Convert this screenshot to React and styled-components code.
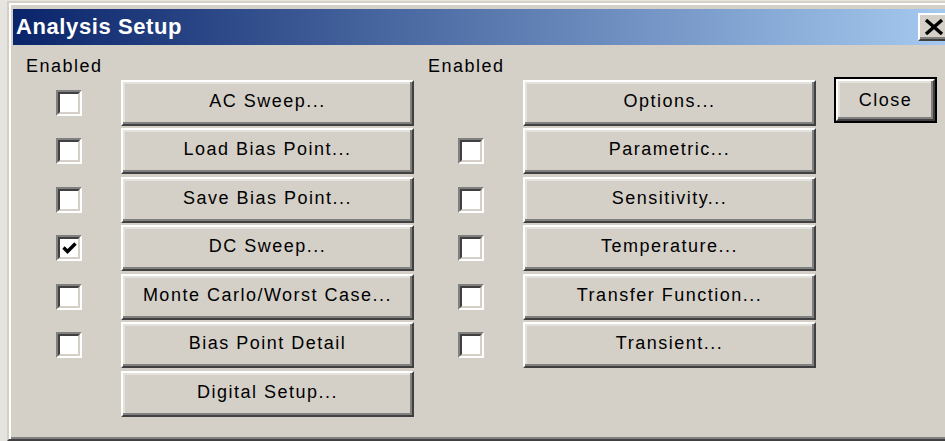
import { Fragment } from "react";
import styled, { createGlobalStyle } from "styled-components";

const GlobalStyle = createGlobalStyle`
  html, body {
    margin: 0;
    padding: 0;
    background: #e6e4df;
    overflow: hidden;
  }
`;

const Page = styled.div`
  width: 945px;
  height: 441px;
  overflow: hidden;
  padding: 1px 0 0 7px;
  box-sizing: border-box;
`;

const Window = styled.div`
  width: 944px;
  height: 440px;
  box-sizing: border-box;
  background: #d4d0c8;
  border-top: 2px solid #d4d0c8;
  border-left: 2px solid #d4d0c8;
  border-bottom: 2px solid #404040;
  box-shadow: inset 2px 2px 0 #ffffff, inset 0 -2px 0 #808080;
  padding: 6px 0 0 4px;
  font-family: "Liberation Sans", Arial, sans-serif;
`;

const TitleBar = styled.div`
  height: 36px;
  display: flex;
  align-items: center;
  justify-content: space-between;
  background: linear-gradient(to right, #0a246a, #a6caf0);
  padding: 0 1px 0 3px;
`;

const TitleText = styled.span`
  color: #ffffff;
  font-size: 22px;
  font-weight: bold;
  letter-spacing: 0.6px;
  line-height: 36px;
`;

const TitleButton = styled.button`
  width: 32px;
  height: 28px;
  padding: 0;
  display: flex;
  align-items: center;
  justify-content: center;
  background: #d4d0c8;
  border: 2px solid;
  border-color: #ffffff #404040 #404040 #ffffff;
  box-shadow: inset -2px -2px 0 #808080;
`;

const Body = styled.div`
  display: flex;
  align-items: flex-start;
  padding: 10px 0 0 13px;
`;

const Section = styled.div`
  display: grid;
  grid-template-columns: 95px 293px;
  row-gap: 2.5px;
  margin-right: ${(p) => p.$gap || 0}px;
`;

const Label = styled.div`
  grid-column: 1 / span 2;
  font-size: 18px;
  letter-spacing: 1.5px;
  line-height: 22px;
  color: #000;
`;

const CheckCell = styled.div`
  display: flex;
  align-items: center;
  padding-left: 30px;
`;

const CheckBox = styled.div`
  width: 26px;
  height: 26px;
  box-sizing: border-box;
  border: 2px solid;
  border-color: #808080 #ffffff #ffffff #808080;
  display: flex;
`;

const CheckInner = styled.div`
  flex: 1;
  background: #ffffff;
  border: 2px solid;
  border-color: #404040 #d4d0c8 #d4d0c8 #404040;
  display: flex;
  align-items: center;
  justify-content: center;
`;

const Button = styled.button`
  height: ${(p) => p.$height || 46}px;
  width: ${(p) => p.$width || 293}px;
  box-sizing: border-box;
  padding: 0 0 4px;
  background: #d4d0c8;
  border: 2px solid;
  border-color: #ffffff #404040 #404040 #ffffff;
  box-shadow: inset -2px -2px 0 #808080, inset 2px 2px 0 #e4e2dc;
  font-family: "Liberation Sans", Arial, sans-serif;
  font-size: 18px;
  letter-spacing: 1.5px;
  line-height: 38px;
  color: #000;
  text-align: center;
  white-space: nowrap;
`;

// default push button gets the extra black outline
const DefaultFrame = styled.div`
  margin-top: 22px;
  border: 2px solid #000;
  display: flex;
`;

const checkRow = (label, checked, withBox = true) => ({ label, checked, withBox });

const leftRows = [
  checkRow("AC Sweep...", false),
  checkRow("Load Bias Point...", false),
  checkRow("Save Bias Point...", false),
  checkRow("DC Sweep...", true),
  checkRow("Monte Carlo/Worst Case...", false),
  checkRow("Bias Point Detail", false),
  checkRow("Digital Setup...", false, false),
];

const rightRows = [
  checkRow("Options...", false, false),
  checkRow("Parametric...", false),
  checkRow("Sensitivity...", false),
  checkRow("Temperature...", false),
  checkRow("Transfer Function...", false),
  checkRow("Transient...", false),
];

function Check({ checked }) {
  return (
    <CheckBox>
      <CheckInner>
        {checked && (
          <svg width="15" height="13" viewBox="0 0 15 13">
            <path d="M1.5 5.5 L5.5 9.5 L13.5 1.5" fill="none" stroke="#000" strokeWidth="3.4" />
          </svg>
        )}
      </CheckInner>
    </CheckBox>
  );
}

function AnalysisColumn({ rows, gap }) {
  return (
    <Section $gap={gap}>
      <Label>Enabled</Label>
      {rows.map((r) => (
        <Fragment key={r.label}>
          <CheckCell>{r.withBox && <Check checked={r.checked} />}</CheckCell>
          <Button>{r.label}</Button>
        </Fragment>
      ))}
    </Section>
  );
}

export default function App() {
  return (
    <Page>
      <GlobalStyle />
      <Window>
        <TitleBar>
          <TitleText>Analysis Setup</TitleText>
          <TitleButton aria-label="Close">
            <svg width="20" height="16" viewBox="0 0 20 16">
              <path d="M2 1 L18 15 M18 1 L2 15" stroke="#000" strokeWidth="3.4" />
            </svg>
          </TitleButton>
        </TitleBar>
        <Body>
          <AnalysisColumn rows={leftRows} gap={14} />
          <AnalysisColumn rows={rightRows} gap={18} />
          <DefaultFrame>
            <Button $width={99} $height={42}>Close</Button>
          </DefaultFrame>
        </Body>
      </Window>
    </Page>
  );
}
